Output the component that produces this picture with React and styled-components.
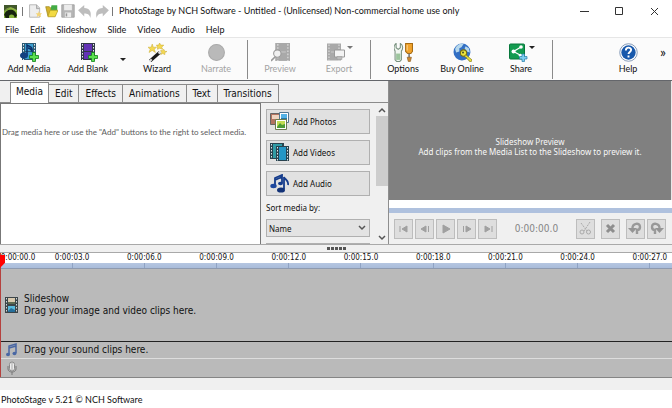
import React from 'react'
import styled, { createGlobalStyle, css } from 'styled-components'

const ui = 'Lato, "Open Sans", sans-serif'
const small = '"Noto Sans", "Open Sans", sans-serif'
const tahoma = '"DejaVu Sans Condensed", "DejaVu Sans", sans-serif'

const GlobalStyle = createGlobalStyle`
  * {
    box-sizing: border-box;
  }
  body {
    margin: 0;
    background: #f0f0f0;
    color: #111;
    font: 9px/14px ${ui};
  }
  button, select {
    font: inherit;
    color: inherit;
    margin: 0;
    padding: 0;
    border: 0;
    border-radius: 0;
    background: none;
    white-space: nowrap;
  }
  svg {
    display: block;
    flex: none;
  }
`

const Window = styled.div`
  display: flex;
  flex-direction: column;
  min-height: 100vh;
  overflow: hidden;
`

const TitleBar = styled.header`
  display: flex;
  align-items: center;
  height: 22px;
  padding-left: 4px;
  background: #fff;
`

const QuickTools = styled.div`
  display: flex;
  align-items: center;
  gap: 3px;
  width: 106px;
`

const Divider = styled.span`
  width: 1px;
  height: 9px;
  margin: 0 2px;
  background: #777;
`

const Title = styled.h1`
  flex: 1;
  margin: 0;
  padding-left: 4px;
  font: inherit;
  white-space: nowrap;
`

const WindowButton = styled.button`
  display: grid;
  place-items: center;
  width: 35px;
  height: 22px;
`

const MenuBar = styled.nav`
  display: flex;
  gap: 11px;
  height: 15px;
  padding-left: 5px;
  background: #fff;
`

const ToolBar = styled.div`
  display: flex;
  gap: 1px;
  height: 43px;
  border-top: 1px solid #e6e6e6;
  background: #fbfbfb;
`

const ToolButton = styled.button`
  position: relative;
  display: flex;
  flex-direction: column;
  align-items: center;
  width: 58px;
  padding-top: 5px;
  ${p => p.disabled && css`
    color: #a3a3a3;
  `}
`

const Caret = styled.span`
  border: 3px solid transparent;
  border-top-color: ${p => p.$color || '#222'};
  border-bottom: 0;
`

const CornerCaret = styled(Caret)`
  position: absolute;
  top: 8px;
  right: 15px;
`

const DropButton = styled.button`
  display: grid;
  place-items: center;
  width: 9px;
`

const Separator = styled.span`
  width: 1px;
  margin: 2px 2px 1px 1px;
  background: #8a8a8a;
`

const Spacer = styled.span`
  flex: 1;
`

const More = styled.button`
  width: 10px;
  margin-right: 4px;
  padding-bottom: 14px;
  font-size: 14px;
`

const Workspace = styled.main`
  display: grid;
  grid-template-columns: minmax(0, 388fr) minmax(0, 284fr);
  grid-template-rows: minmax(0, 1fr);
  height: 165px;
  border-top: 1px solid #64666b;
  border-bottom: 1px solid #a9a9a9;
`

const Library = styled.section`
  display: flex;
  flex-direction: column;
`

const Tabs = styled.div`
  display: flex;
  flex: none;
  align-items: flex-end;
  height: 22px;
  padding-left: 10px;
  border-bottom: 1px solid #8b8b8b;
  font: 10px/14px ${tahoma};
`

const Tab = styled.button`
  height: ${p => (p.$active ? 21 : 18)}px;
  padding: 0 6px;
  border: solid #8b8b8b;
  border-width: 1px 1px 0 0;
  ${p => p.$active && css`
    margin-bottom: -1px;
    padding: 0 5px 2px;
    border-left-width: 1px;
    background: #fff;
  `}
`

const LibraryBody = styled.div`
  display: flex;
  flex: 1;
  min-height: 0;
`

const MediaList = styled.div`
  flex: 1;
  min-width: 0;
  padding: 21px 0 0 1px;
  border: 1px solid #777;
  border-bottom: 0;
  background: #fff;
  color: #5c5c5c;
  font: 8px/14px ${ui};
  white-space: nowrap;
`

const Side = styled.div`
  display: flex;
  flex: none;
  flex-direction: column;
  gap: 6px;
  width: 114px;
  padding: 6px 5px 0;
  overflow: hidden;
  font: 8px/14px ${small};
`

const AddButton = styled.button`
  display: flex;
  flex: none;
  align-items: center;
  gap: 3px;
  height: 25px;
  padding-left: 3px;
  border: 1px solid #b0b0b0;
  background: #e1e1e1;
`

const SortLabel = styled.label`
  display: flex;
  flex: none;
  flex-direction: column;
  gap: 6px;
  line-height: 11px;
`

const SelectBox = styled.span`
  display: flex;
  align-items: center;
  height: 18px;
  padding-right: 3px;
  border: 1px solid #b0b0b0;
  background: #e3e3e3;

  select {
    flex: 1;
    appearance: none;
    padding-left: 2px;
    outline: 0;
  }
`

const ScrollBar = styled.div`
  display: flex;
  flex: none;
  flex-direction: column;
  align-items: center;
  justify-content: space-between;
  width: 13px;
  padding: 4px 0 3px;
`

const Thumb = styled.span`
  width: 12px;
  height: 70px;
  margin: 3px 0 auto;
  background: #cdcdcd;
`

const Preview = styled.section`
  display: flex;
  flex-direction: column;
  border-left: 1px solid #8e8e8e;
`

const Screen = styled.div`
  flex: 1;
  padding-top: 56px;
  border-right: 1px solid #e8e8e8;
  background: #808080;
  color: #f8f8f8;
  font: 8px/10px ${small};
  text-align: center;
  white-space: nowrap;
`

const Scrubber = styled.div`
  height: 13px;
  border-bottom: 5px solid #afc1de;
  background: #fff;
`

const Transport = styled.div`
  display: flex;
  align-items: center;
  height: 31px;
  padding: 0 6px 0 5px;
`

const Group = styled.div`
  display: flex;
  gap: 2px;
`

const PlayButton = styled.button`
  display: grid;
  place-items: center;
  width: 19px;
  height: 20px;
  border: 1px solid #bdbdbd;
  background: #dedede;
`

const Time = styled.output`
  flex: 1;
  color: #858585;
  font: 10px/14px ${tahoma};
  text-align: center;
`

const EditGroup = styled(Group)`
  gap: 6px;
`

const Splitter = styled.div`
  display: flex;
  align-items: center;
  justify-content: center;
  gap: 1px;
  height: 7px;

  i {
    width: 3px;
    height: 3px;
    background: #555;
  }
`

const Timeline = styled.section`
  position: relative;
  border-top: 1px solid #a9a9a9;
  border-bottom: 1px solid #858585;
  font: 10px/12px ${tahoma};
`

const Ruler = styled.div`
  height: 16px;
  overflow: hidden;
  border-bottom: 1px solid #8e9aaf;
  background: linear-gradient(#fff 10px, #b5c6e1 10px, #a9bcda);
  font: 8px/10px ${tahoma};
`

const Marks = styled.div`
  display: flex;
  height: 15px;
  margin-right: -14px;
`

const Mark = styled.span`
  display: flex;
  flex: 1;
  flex-direction: column;
  align-items: center;

  &::after {
    content: '';
    flex: 1;
    width: 1px;
    background: #8fa3c4;
  }

  &:first-child {
    flex: 0 0 36px;

    &::after {
      background: none;
    }
  }
`

const Track = styled.div`
  display: flex;
  align-items: center;
  gap: 5px;
  height: ${p => p.$height}px;
  padding-left: 4px;
  border-bottom: ${p => (p.$line ? `1px solid ${p.$line}` : 0)};
  background: #bababa;
`

const Playhead = styled.span`
  position: absolute;
  top: 0;
  bottom: 0;
  left: 0;
  width: 1px;
  background: #b5413e;

  &::before {
    content: '';
    position: absolute;
    top: 2px;
    left: 0;
    width: 5px;
    height: 13px;
    background: #f00;
    clip-path: polygon(0 0, 100% 0, 100% 60%, 0 100%);
  }
`

const StatusBar = styled.footer`
  height: 18px;
  margin-top: auto;
  padding: 3px 1px;
  background: #fff;
`

const Icon = ({ w = 18, h = w, box = '0 0 18 18', children }) => (
  <svg width={w} height={h} viewBox={box} fill="none" aria-hidden="true">{children}</svg>
)

const Film = ({ fill, frame = '#303746' }) => (
  <>
    <path d="M2 0h14v17H2z" fill={frame} />
    <path d="M5 1h8v7H5zM5 9h8v7H5z" fill={fill} />
    <path d="M3.5 1v16M14.5 1v16" stroke="#e8edf2" strokeDasharray="1.5 1.5" />
  </>
)

const Plus = () => (
  <path d="M12.5 9.5h3v3h3v3h-3v3h-3v-3h-3v-3h3z" fill="#5be04f" stroke="#12801a" strokeWidth=".8" />
)

const AddMediaIcon = () => (
  <Icon w={20} h={19} box="-1 0 20 19">
    <Film fill="#3c9fd0" frame="#2b5a74" />
    <path d="M7 13V2c2 2 6 1 5 6-1-2-3-3-4-3" stroke="#0b2f68" strokeWidth="1.5" />
    <ellipse cx="4" cy="12.5" rx="4" ry="3" fill="#124080" />
    <Plus />
  </Icon>
)

const AddBlankIcon = () => (
  <Icon w={20} h={19} box="-1 0 20 19">
    <Film fill="#6232b5" />
    <Plus />
  </Icon>
)

const WizardIcon = () => (
  <Icon w={19} h={19}>
    <path d="m2 17 9-8" stroke="#191919" strokeWidth="3" />
    <path d="m10 10 2-2M1.5 17.5l2-2" stroke="#ddd" strokeWidth="2" />
    <path d="m4 1 1 3h3L6 6l1 3-3-2-3 2 1-3-2-2h3zM11 0l1 2h3l-2 2 1 2-3-1-2 1V4L8 2h2zM15 6l1 2h2l-2 1v2l-2-1-2 1 1-2-1-2h2z" fill="#f5d951" stroke="#c9ad38" strokeWidth=".5" />
  </Icon>
)

const NarrateIcon = () => (
  <Icon w={19} h={19}>
    <circle cx="9" cy="9" r="7.5" fill="#b9b9b9" stroke="#aaa" />
  </Icon>
)

const PreviewIcon = () => (
  <Icon w={19} h={19}>
    <path d="M4 0h14v17H4z" fill="#a9a9a9" />
    <path d="M6.5 1v16M16 1v16" stroke="#e4e4e4" strokeDasharray="1.5 1.5" />
    <path d="M8 8.5h6" stroke="#c9c9c9" />
    <circle cx="6" cy="10" r="3.5" fill="#f0f0f0" stroke="#999" />
    <path d="m4 13-4 4" stroke="#999" strokeWidth="1.5" />
  </Icon>
)

const ExportIcon = () => (
  <Icon w={24} h={19} box="0 0 24 18">
    <path d="M0 0h14v17H0z" fill="#a9a9a9" />
    <path d="M2 1v16M12 1v16" stroke="#e4e4e4" strokeDasharray="1.5 1.5" />
    <path d="M4 8.5h6" stroke="#c9c9c9" />
    <path d="M7.5 6.5h10v7h-10z" fill="#f3f3f3" stroke="#999" />
    <path d="M10 13h5v3h-5z" fill="#bbb" stroke="#999" strokeWidth=".5" />
  </Icon>
)

const OptionsIcon = () => (
  <Icon w={19} h={19}>
    <path d="M2 .5v4l2 1.5 2-1.5v-4C9 2 8.5 6 7 7.5V16l-1.5 1.5h-3L1 16V7.5C-.5 5 0 2 2 .5z" fill="#f0f6f0" stroke="#78907e" />
    <path d="M2 10h4v6H2z" fill="#9cc59d" />
    <path d="M11 .5h6.5V8L16 10h-3l-2-2z" fill="#f1a32c" stroke="#a76b12" />
    <path d="M12.5 2v5" stroke="#fbd28c" />
    <path d="M14.3 10v4" stroke="#777" strokeWidth="1.5" />
    <path d="M12.5 13.5h4l-1 4h-2z" fill="#cf8b30" stroke="#885c25" strokeWidth=".6" />
  </Icon>
)

const BuyIcon = () => (
  <Icon w={19} h={19}>
    <circle cx="8.5" cy="8.5" r="8" fill="#326fc4" />
    <path d="M2 6c1-4 5-6 8-5l-2 3-2 1v3l-3 1zM12 3l3 2 1 4-3-1-2-3z" fill="#b6d8ec" />
    <circle cx="10" cy="9.5" r="3" fill="#ece43d" stroke="#776d12" />
    <circle cx="9.5" cy="9" r="1" fill="#4d5728" />
    <path d="m12 11 6 5-1 2-2-1v-1l-2-1v-1l-2-1z" fill="#ece43d" stroke="#776d12" strokeWidth=".6" />
  </Icon>
)

const ShareIcon = () => (
  <Icon w={24} h={19} box="0 0 24 18">
    <rect x=".5" y=".5" width="15" height="15" rx="1" fill="#139b50" stroke="#08783c" />
    <path d="M12 3.5 4.5 8l7.5 4" stroke="#fff" strokeWidth="1.2" />
    <circle cx="12" cy="3.5" r="1.8" fill="#fff" />
    <circle cx="4.5" cy="8" r="2" fill="#fff" />
    <circle cx="11.5" cy="12" r="1.8" fill="#fff" />
    <path d="M13 10.5h2.5V13H18v2.5h-2.5V18H13v-2.5h-2.5V13H13z" fill="#7dcef0" stroke="#287da9" strokeWidth=".7" />
  </Icon>
)

const HelpIcon = () => (
  <Icon w={19} h={19}>
    <circle cx="9" cy="9" r="8.3" fill="#fff" stroke="#7189ad" strokeWidth=".8" />
    <circle cx="9" cy="9" r="6.8" fill="#1758ac" />
    <path d="M6.5 7c0-3.5 5-3.3 5-.5 0 2-2.5 2-2.5 4M9 11.8v2" stroke="#fff" strokeWidth="1.8" />
  </Icon>
)

const LogoIcon = () => (
  <Icon w={13} h={13}>
    <path d="M0 0h18v18H0z" fill="#86b33c" />
    <path d="M0 0h18v7L9 3 0 9z" fill="#41572b" />
    <path d="M2 18c0-2-1-3-2-4C3 4 16 4 18 15l-3 3c-1-5-5-6-8-3v3z" fill="#17230f" />
    <path d="M0 9c3-4 6-5 9-5s7 2 9 5" stroke="#a5bd58" />
  </Icon>
)

const NewIcon = () => (
  <Icon w={14} h={14}>
    <path d="M2 1h9l4 4v12H2z" fill="#eee" stroke="#aaa" />
    <path d="M11 1v5h4" fill="#d0d0d0" stroke="#999" />
    <path d="m14 9 1 3h3l-2 2 1 3-3-2-3 2 1-3-2-2h3z" fill="#f4d475" />
  </Icon>
)

const OpenIcon = () => (
  <Icon w={13} h={14}>
    <path d="M1 3h5l2 2h6v11H4z" fill="#d6b32d" stroke="#9d891a" />
    <path d="M9 1h8v9H7z" fill="#43ab46" />
    <path d="m4 17 3-9h11l-4 9z" fill="#f2da43" stroke="#b79e22" />
  </Icon>
)

const SaveIcon = () => (
  <Icon w={14} h={14}>
    <path d="M1 1h16v16H1z" fill="#b5b5b5" stroke="#9c9c9c" />
    <path d="M4 1h10v7H4zM5 11h8v6H5z" fill="#ececec" />
    <path d="M6 12h2v4H6z" fill="#999" />
  </Icon>
)

const UndoIcon = ({ flip }) => (
  <Icon w={14} h={13} box="0 0 18 17">
    <g transform={flip ? 'translate(18 0) scale(-1 1)' : undefined}>
      <path d="M0 7 8 0v4c7 0 10 5 8 13-1-5-4-6-8-6v4z" fill="#bdbdbd" />
    </g>
  </Icon>
)

const PhotosIcon = () => (
  <Icon w={20} h={19} box="0 0 20 19">
    <path d="M.5 1.5h10v11H.5z" fill="#b27360" stroke="#666" />
    <path d="M2 3h7v4H2z" fill="#f0d4c0" />
    <path d="M9.5 .5h9v10h-9z" fill="#fff" stroke="#557890" />
    <path d="M11 2h6v4h-6z" fill="#54b2e6" />
    <path d="M11 6h6v3h-6z" fill="#2a78a1" />
    <path d="M5.5 7.5h11v10h-11z" fill="#fff" stroke="#6c7b4f" />
    <path d="M7 9h8v7H7z" fill="#c1dc53" />
    <path d="m7 15 3-4 2 2 3-1v4H7z" fill="#4c9b36" />
  </Icon>
)

const VideosIcon = () => (
  <Icon w={20} h={19} box="0 0 20 19">
    <path d="M0 0h14v16H0z" fill="#29434f" />
    <path d="M3 1h9v14H3z" fill="#309ba5" />
    <path d="M1.5 1v15" stroke="#dce7e9" strokeDasharray="1.5 1.5" />
    <path d="M6 3h13v15H6z" fill="#28424e" />
    <path d="M9 4h7v13H9z" fill="#2496c5" />
    <path d="M7.5 4v14M17.5 4v14" stroke="#dce7e9" strokeDasharray="1.5 1.5" />
  </Icon>
)

const AudioIcon = () => (
  <Icon w={20} h={19} box="0 0 20 19">
    <path d="M5 12V4l7-3v8M5 6l7-3M14 15V3c1 3 5 3 4 8" stroke="#153c8c" strokeWidth="1.8" />
    <ellipse cx="3.5" cy="12" rx="3.2" ry="2.2" fill="#1d479d" />
    <ellipse cx="11" cy="16" rx="4" ry="2.6" fill="#123277" />
    <ellipse cx="10.5" cy="9.5" rx="2.5" ry="1.8" fill="#153c8c" />
  </Icon>
)

const Chevron = ({ d }) => (
  <Icon w={8} h={6} box="0 0 8 6"><path d={d} stroke="#555" strokeWidth="1.5" /></Icon>
)

const transport = [
  ['First frame', 'M2 3v6M9 3v6L4 6z'],
  ['Previous frame', 'M7 3v6L2 6zM9.5 3v6'],
  ['Play', 'M3 2v8l7-4z'],
  ['Next frame', 'M5 3v6l5-3zM2.5 3v6'],
  ['Last frame', 'M3 3v6l5-3zM10 3v6']
]

const Glyph = ({ d }) => (
  <Icon w={12} h={12} box="0 0 12 12"><path d={d} fill="#a0a0a0" stroke="#a0a0a0" /></Icon>
)

const Turn = ({ flip }) => (
  <Icon w={15} h={15} box="0 0 15 15">
    <g transform={flip ? 'translate(15 0) scale(-1 1)' : undefined}>
      <path d="M4.5 8C4 2 12 1 12 6c0 2-1 3-3 3v4" stroke="#999" strokeWidth="2.4" />
      <path d="M0 7h9l-4.500 5z" fill="#959595" />
    </g>
  </Icon>
)

const Tool = ({ icon, label, caret, ...rest }) => (
  <ToolButton {...rest}>
    {icon}
    {label}
    {caret && <CornerCaret $color={caret} />}
  </ToolButton>
)

const menus = ['File', 'Edit', 'Slideshow', 'Slide', 'Video', 'Audio', 'Help']
const tabs = ['Media', 'Edit', 'Effects', 'Animations', 'Text', 'Transitions']
const marks = ['00', '03', '06', '09', '12', '15', '18', '21', '24', '27']

const App = () => (
  <Window>
    <GlobalStyle />
    <TitleBar>
      <QuickTools>
        <LogoIcon />
        <Divider />
        <button aria-label="New"><NewIcon /></button>
        <button aria-label="Open"><OpenIcon /></button>
        <button aria-label="Save"><SaveIcon /></button>
        <button aria-label="Undo"><UndoIcon /></button>
        <button aria-label="Redo"><UndoIcon flip /></button>
      </QuickTools>
      <Divider />
      <Title>PhotoStage by NCH Software - Untitled - (Unlicensed) Non-commercial home use only</Title>
      <WindowButton aria-label="Minimize">
        <Icon w={9} box="0 0 9 9"><path d="M0 4.5h9" stroke="#333" /></Icon>
      </WindowButton>
      <WindowButton aria-label="Maximize">
        <Icon w={9} box="0 0 9 9"><path d="M.5 .5h7v7h-7z" stroke="#333" /></Icon>
      </WindowButton>
      <WindowButton aria-label="Close">
        <Icon w={9} box="0 0 9 9"><path d="m1 1 7 7M8 1 1 8" stroke="#333" /></Icon>
      </WindowButton>
    </TitleBar>
    <MenuBar>
      {menus.map(name => <button key={name}>{name}</button>)}
    </MenuBar>
    <ToolBar>
      <Tool icon={<AddMediaIcon />} label="Add Media" />
      <Tool icon={<AddBlankIcon />} label="Add Blank" />
      <DropButton aria-label="Blank clip types"><Caret /></DropButton>
      <Tool icon={<WizardIcon />} label="Wizard" />
      <Tool icon={<NarrateIcon />} label="Narrate" disabled />
      <Separator />
      <Tool icon={<PreviewIcon />} label="Preview" disabled />
      <Tool icon={<ExportIcon />} label="Export" caret="#777" disabled />
      <Separator />
      <Tool icon={<OptionsIcon />} label="Options" />
      <Tool icon={<BuyIcon />} label="Buy Online" />
      <Tool icon={<ShareIcon />} label="Share" caret="#222" />
      <Separator />
      <Spacer />
      <Tool icon={<HelpIcon />} label="Help" />
      <More aria-label="More tools">»</More>
    </ToolBar>

    <Workspace>
      <Library>
        <Tabs role="tablist">
          {tabs.map((name, i) => (
            <Tab key={name} role="tab" aria-selected={i === 0} $active={i === 0}>{name}</Tab>
          ))}
        </Tabs>
        <LibraryBody>
          <MediaList>Drag media here or use the "Add" buttons to the right to select media.</MediaList>
          <Side>
            <AddButton><PhotosIcon />Add Photos</AddButton>
            <AddButton><VideosIcon />Add Videos</AddButton>
            <AddButton><AudioIcon />Add Audio</AddButton>
            <SortLabel>
              Sort media by:
              <SelectBox>
                <select><option>Name</option></select>
                <Chevron d="m1 1 3 3 3-3" />
              </SelectBox>
            </SortLabel>
            <AddButton aria-label="More options" />
          </Side>
          <ScrollBar>
            <Chevron d="m1 5 3-3 3 3" />
            <Thumb />
            <Chevron d="m1 1 3 3 3-3" />
          </ScrollBar>
        </LibraryBody>
      </Library>
      <Preview>
        <Screen>
          Slideshow Preview<br />
          Add clips from the Media List to the Slideshow to preview it.
        </Screen>
        <Scrubber />
        <Transport>
          <Group>
            {transport.map(([name, d]) => (
              <PlayButton key={name} aria-label={name} disabled><Glyph d={d} /></PlayButton>
            ))}
          </Group>
          <Time>0:00:00.0</Time>
          <EditGroup>
            <PlayButton aria-label="Split clip" disabled>
              <Icon w={13} box="0 0 13 13">
                <path d="M11 0 5 9M2 1l6 8" stroke="#aaa" strokeDasharray="2 1" />
                <circle cx="3" cy="10" r="2" stroke="#aaa" />
                <circle cx="9.5" cy="10" r="2" stroke="#aaa" />
              </Icon>
            </PlayButton>
            <PlayButton aria-label="Delete" disabled>
              <Icon w={11} box="0 0 11 11"><path d="m2 2 7 7M9 2 2 9" stroke="#8e8e8e" strokeWidth="3" /></Icon>
            </PlayButton>
            <Group>
              <PlayButton aria-label="Rotate left" disabled><Turn /></PlayButton>
              <PlayButton aria-label="Rotate right" disabled><Turn flip /></PlayButton>
            </Group>
          </EditGroup>
        </Transport>
      </Preview>
    </Workspace>
    <Splitter><i /><i /><i /><i /><i /></Splitter>

    <Timeline>
      <Ruler>
        <Marks>
          {marks.map(s => <Mark key={s}>0:00:{s}.0</Mark>)}
        </Marks>
      </Ruler>
      <Track $height={73} $line="#222">
        <Icon w={15} h={16} box="0 0 15 16">
          <path d="M1 0h13v16H1z" fill="#3c4549" />
          <path d="M4 1h7v6H4z" fill="#d8c9af" />
          <path d="M4 5h7v2H4z" fill="#5d6b52" />
          <path d="M4 9h7v6H4z" fill="#58b9dc" />
          <path d="m4 14 3-3 4 2v2H4z" fill="#256e9a" />
          <path d="M2.5 1v15M12.5 1v15" stroke="#ced8dc" strokeDasharray="1.5 1.5" />
        </Icon>
        <div>Slideshow<br />Drag your image and video clips here.</div>
      </Track>
      <Track $height={17} $line="#ddd">
        <Icon w={15} h={14} box="0 0 15 14">
          <path d="M5 11V3l7-2v9M5 5l7-2" stroke="#4967a4" strokeWidth="1.5" />
          <ellipse cx="4" cy="11.5" rx="2" ry="1.7" fill="#4967a4" />
          <ellipse cx="10.5" cy="10.5" rx="2" ry="1.7" fill="#4967a4" />
        </Icon>
        Drag your sound clips here.
      </Track>
      <Track $height={18}>
        <Icon w={15} h={14} box="0 0 15 14">
          <path d="M4 5v3c0 4 8 4 8 0V5M8 11v3" stroke="#777" />
          <rect x="5.5" y="1" width="5" height="9" rx="2.5" fill="#eee" stroke="#888" />
          <path d="M8 2v7" stroke="#aaa" />
        </Icon>
      </Track>
      <Playhead />
    </Timeline>
    <StatusBar>PhotoStage v 5.21 © NCH Software</StatusBar>
  </Window>
)

export default App
